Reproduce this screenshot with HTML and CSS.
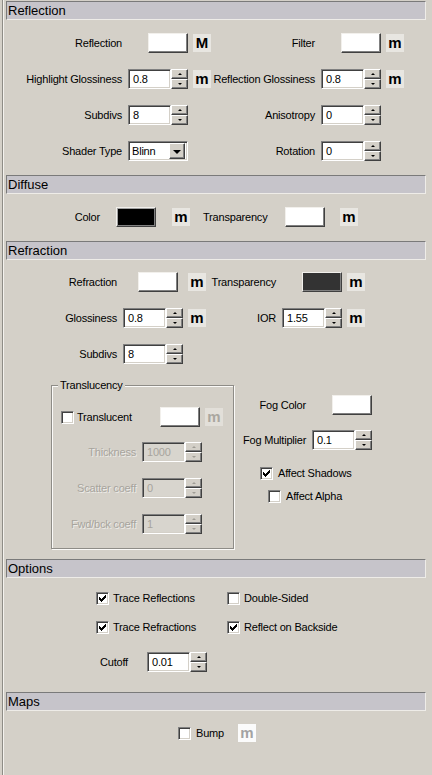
FILE: index.html
```html
<!DOCTYPE html>
<html>
<head>
<meta charset="utf-8">
<title>Material</title>
<link rel="stylesheet" href="styles.css">
</head>
<body>
<div class="panel">

  <div class="hdr hdr-first">Reflection</div>
  <div class="grid g-refl">
    <span class="lbl">Reflection</span>
    <span class="ctl end"><span class="sw sw-white"></span></span>
    <span class="mb">M</span>
    <span class="lbl">Filter</span>
    <span class="ctl end"><span class="sw sw-white"></span></span>
    <span class="mb">m</span>

    <span class="lbl">Highlight Glossiness</span>
    <span class="ctl"><span class="num">0.8</span><span class="spin"><i></i><i></i></span></span>
    <span class="mb">m</span>
    <span class="lbl">Reflection Glossiness</span>
    <span class="ctl"><span class="num">0.8</span><span class="spin"><i></i><i></i></span></span>
    <span class="mb">m</span>

    <span class="lbl">Subdivs</span>
    <span class="ctl"><span class="num">8</span><span class="spin"><i></i><i></i></span></span>
    <span></span>
    <span class="lbl">Anisotropy</span>
    <span class="ctl"><span class="num">0</span><span class="spin"><i></i><i></i></span></span>
    <span></span>

    <span class="lbl">Shader Type</span>
    <span class="ctl"><span class="sel"><span class="sel-t">Blinn</span><span class="sel-a"></span></span></span>
    <span></span>
    <span class="lbl">Rotation</span>
    <span class="ctl"><span class="num">0</span><span class="spin"><i></i><i></i></span></span>
    <span></span>
  </div>

  <div class="hdr">Diffuse</div>
  <div class="row-diff">
    <span class="lbl d-color">Color</span>
    <span class="sw sw-black"></span>
    <span class="mb d-m1">m</span>
    <span class="d-trans">Transparency</span>
    <span class="sw sw-white"></span>
    <span class="mb d-m2">m</span>
  </div>

  <div class="hdr">Refraction</div>
  <div class="grid g-refr">
    <span class="lbl">Refraction</span>
    <span class="ctl"><span class="sw sw-white sw-off"></span></span>
    <span class="mb">m</span>
    <span class="lbl">Transparency</span>
    <span class="ctl end"><span class="sw sw-dark"></span></span>
    <span class="mb">m</span>

    <span class="lbl">Glossiness</span>
    <span class="ctl"><span class="num">0.8</span><span class="spin"><i></i><i></i></span></span>
    <span class="mb">m</span>
    <span class="lbl">IOR</span>
    <span class="ctl"><span class="num">1.55</span><span class="spin"><i></i><i></i></span></span>
    <span class="mb">m</span>

    <span class="lbl">Subdivs</span>
    <span class="ctl"><span class="num">8</span><span class="spin"><i></i><i></i></span></span>
  </div>

  <div class="lower">
    <div class="group">
      <span class="legend">Translucency</span>
      <div class="tr-row">
        <span class="cb"></span>
        <span class="tr-t">Translucent</span>
        <span class="sw sw-white"></span>
        <span class="mb mb-dis tr-m">m</span>
      </div>
      <div class="grid g-tr">
        <span class="lbl dis">Thickness</span>
        <span class="ctl"><span class="num num-dis">1000</span><span class="spin spin-dis"><i></i><i></i></span></span>
        <span class="lbl dis">Scatter coeff</span>
        <span class="ctl"><span class="num num-dis">0</span><span class="spin spin-dis"><i></i><i></i></span></span>
        <span class="lbl dis">Fwd/bck coeff</span>
        <span class="ctl"><span class="num num-dis">1</span><span class="spin spin-dis"><i></i><i></i></span></span>
      </div>
    </div>

    <div class="fog">
      <div class="grid g-fog">
        <span class="lbl">Fog Color</span>
        <span class="ctl end"><span class="sw sw-white"></span></span>
        <span class="lbl">Fog Multiplier</span>
        <span class="ctl"><span class="num">0.1</span><span class="spin"><i></i><i></i></span></span>
      </div>
      <div class="cbrow fog-cb1">
        <span class="cb"><svg width="7" height="7" viewBox="0 0 7 7"><path d="M0 2h1v3H0zM1 3h1v3H1zM2 4h1v3H2zM3 3h1v3H3zM4 2h1v3H4zM5 1h1v3H5zM6 0h1v3H6z" fill="#000"/></svg></span>
        <span class="cb-t">Affect Shadows</span>
      </div>
      <div class="cbrow fog-cb2">
        <span class="cb"></span>
        <span class="cb-t">Affect Alpha</span>
      </div>
    </div>
  </div>

  <div class="hdr hdr-opt">Options</div>
  <div class="grid g-opt">
    <div class="cbrow">
      <span class="cb"><svg width="7" height="7" viewBox="0 0 7 7"><path d="M0 2h1v3H0zM1 3h1v3H1zM2 4h1v3H2zM3 3h1v3H3zM4 2h1v3H4zM5 1h1v3H5zM6 0h1v3H6z" fill="#000"/></svg></span>
      <span class="cb-t">Trace Reflections</span>
    </div>
    <div class="cbrow">
      <span class="cb"></span>
      <span class="cb-t">Double-Sided</span>
    </div>
    <div class="cbrow">
      <span class="cb"><svg width="7" height="7" viewBox="0 0 7 7"><path d="M0 2h1v3H0zM1 3h1v3H1zM2 4h1v3H2zM3 3h1v3H3zM4 2h1v3H4zM5 1h1v3H5zM6 0h1v3H6z" fill="#000"/></svg></span>
      <span class="cb-t">Trace Refractions</span>
    </div>
    <div class="cbrow">
      <span class="cb"><svg width="7" height="7" viewBox="0 0 7 7"><path d="M0 2h1v3H0zM1 3h1v3H1zM2 4h1v3H2zM3 3h1v3H3zM4 2h1v3H4zM5 1h1v3H5zM6 0h1v3H6z" fill="#000"/></svg></span>
      <span class="cb-t">Reflect on Backside</span>
    </div>
  </div>
  <div class="cut-row">
    <span class="cut-l">Cutoff</span>
    <span class="ctl"><span class="num">0.01</span><span class="spin"><i></i><i></i></span></span>
  </div>

  <div class="hdr hdr-maps">Maps</div>
  <div class="bump-row">
    <span class="cb"></span>
    <span class="cb-t">Bump</span>
    <span class="mb mb-off">m</span>
  </div>

</div>
</body>
</html>
```

FILE: styles.css
```css
* { box-sizing: border-box; }

body {
  margin: 0;
  background: #d4d0c8;
  font-family: "Liberation Sans", Arial, sans-serif;
  font-size: 11px;
  letter-spacing: -0.2px;
  color: #000;
  overflow: hidden;
}

.panel {
  margin-left: 2px;
  height: 775px;
  border-left: 1px solid #8e8c86;
  box-shadow: inset 1px 0 0 #f4f2ee;
  padding: 1px 0 0 3px;
}

/* rollout headers */
.hdr {
  width: 420px;
  height: 19px;
  margin-top: 14px;
  background: #c6c4ca;
  border: 1px solid;
  border-color: #7a7a7a #eeece8 #eeece8 #7a7a7a;
  font-size: 13px;
  line-height: 17px;
  padding-left: 1px;
  letter-spacing: 0;
}
.hdr-first { margin-top: 0; }
.hdr-opt { margin-top: 10px; }
.hdr-maps { margin-top: 20px; }

/* generic grid rows */
.grid {
  display: grid;
  grid-auto-rows: 20px;
  align-items: center;
}
.lbl {
  text-align: right;
  padding-right: 6px;
  white-space: nowrap;
  line-height: 20px;
}
.ctl {
  display: flex;
  width: 60px;
  height: 20px;
}
.ctl.end { justify-content: flex-end; }

/* numeric field */
.num {
  width: 43px;
  height: 20px;
  background: #fff;
  border: 1px solid;
  border-color: #808080 #fff #fff #808080;
  box-shadow: inset 1px 1px 0 #404040, inset -1px -1px 0 #d4d0c8;
  padding-left: 4px;
  line-height: 18px;
}
.num-dis {
  background: #d8d5ce;
  color: #a7a49d;
}

/* spinner */
.spin {
  width: 17px;
  height: 20px;
  display: flex;
  flex-direction: column;
}
.spin i {
  flex: 1;
  background: #d4d0c8;
  border: 1px solid;
  border-color: #fff #404040 #404040 #fff;
  box-shadow: inset -1px -1px 0 #808080;
  display: flex;
  align-items: center;
  justify-content: center;
}
.spin i:first-child::after {
  content: "";
  border-left: 2px solid transparent;
  border-right: 2px solid transparent;
  border-bottom: 2px solid #000;
}
.spin i:last-child::after {
  content: "";
  border-left: 2px solid transparent;
  border-right: 2px solid transparent;
  border-top: 2px solid #000;
}
.spin-dis i:first-child::after { border-bottom-color: #a09d96; }
.spin-dis i:last-child::after { border-top-color: #a09d96; }

/* colour swatch */
.sw {
  display: block;
  width: 40px;
  height: 20px;
  border: 1px solid;
  border-color: #f2f0ec #404040 #404040 #f2f0ec;
  box-shadow: inset -1px -1px 0 #808080;
}
.sw-white { background: #fff; }
.sw-black { background: #000; box-shadow: inset -1px -1px 0 #808080, inset 1px 1px 0 #a0a0a0; }
.sw-dark { background: #333; }
.sw-off { margin-left: 15px; }

/* map button */
.mb {
  display: block;
  width: 18px;
  height: 18px;
  background: #e8e6e1;
  font-weight: bold;
  font-size: 15px;
  line-height: 17px;
  text-align: center;
  letter-spacing: 0;
}
.mb-dis { color: #aaa7a0; background: #e2dfd9; }
.mb-off { color: #a3a3a3; background: #fbfbfb; }

/* dropdown */
.sel {
  display: flex;
  align-items: center;
  width: 60px;
  height: 20px;
  background: #fff;
  border: 1px solid;
  border-color: #808080 #fff #fff #808080;
  box-shadow: inset 1px 1px 0 #404040, inset -1px -1px 0 #d4d0c8;
  padding: 1px 2px 1px 3px;
}
.sel-t { flex: 1; }
.sel-a {
  width: 16px;
  height: 16px;
  background: #d4d0c8;
  border: 1px solid;
  border-color: #fff #404040 #404040 #fff;
  box-shadow: inset -1px -1px 0 #808080;
  display: flex;
  align-items: center;
  justify-content: center;
}
.sel-a::after {
  content: "";
  border-left: 4px solid transparent;
  border-right: 4px solid transparent;
  border-top: 4px solid #000;
  margin-top: 1px;
}

/* Reflection */
.g-refl {
  margin-top: 13px;
  grid-template-columns: 122px 65px 18px 110px 65px 18px;
  row-gap: 16px;
}

/* Diffuse */
.row-diff {
  display: flex;
  align-items: center;
  height: 20px;
  margin-top: 13px;
}
.d-color { width: 94px; padding-right: 0; margin-right: 16px; }
.d-m1 { margin-left: 16px; }
.d-trans { width: 82px; margin-left: 13px; white-space: nowrap; }
.d-m2 { margin-left: 15px; }

/* Refraction */
.g-refr {
  margin-top: 12px;
  grid-template-columns: 117px 65px 18px 76px 65px 18px;
  row-gap: 16px;
}

.lower {
  display: flex;
  margin: 21px 0 0 45px;
}

.group {
  width: 183px;
  height: 164px;
  border: 1px solid #8e8c87;
  box-shadow: inset 1px 1px 0 #fbfaf8, 1px 1px 0 #fbfaf8;
}
.legend {
  display: block;
  width: fit-content;
  margin: -7px 0 0 6px;
  padding: 0 2px;
  line-height: 13px;
  background: #d4d0c8;
}
.tr-row {
  display: flex;
  align-items: center;
  height: 20px;
  margin-top: 15px;
  padding-left: 9px;
}
.tr-t { width: 86px; padding-left: 3px; white-space: nowrap; }
.tr-m { margin-left: 5px; }
.g-tr {
  margin-top: 15px;
  grid-template-columns: 90px 60px;
  row-gap: 16px;
}
.dis {
  color: #a7a49d;
  text-shadow: 1px 1px 0 rgba(255, 255, 255, 0.6);
}

/* checkbox */
.cb {
  display: flex;
  align-items: center;
  justify-content: center;
  flex: none;
  width: 13px;
  height: 13px;
  background: #fff;
  border: 1px solid;
  border-color: #808080 #fff #fff #808080;
  box-shadow: inset 1px 1px 0 #404040, inset -1px -1px 0 #d4d0c8;
}
.cb svg { display: block; }
.cbrow {
  display: flex;
  align-items: center;
  height: 13px;
  line-height: 13px;
  white-space: nowrap;
}
.cb-t { margin-left: 5px; }

.fog { margin-left: 9px; padding-top: 10px; }
.g-fog {
  grid-template-columns: 69px 60px;
  row-gap: 15px;
}
.fog-cb1 { margin-top: 17px; padding-left: 17px; }
.fog-cb2 { margin-top: 10px; padding-left: 25px; }

/* Options */
.g-opt {
  margin: 14px 0 0 90px;
  grid-template-columns: 131px auto;
  grid-auto-rows: 13px;
  row-gap: 16px;
}
.g-opt .cb-t { margin-left: 4px; }
.cut-row {
  display: flex;
  align-items: center;
  height: 20px;
  margin: 18px 0 0 94px;
}
.cut-l { width: 47px; }

/* Maps */
.bump-row {
  display: flex;
  align-items: center;
  height: 18px;
  margin: 13px 0 0 172px;
}
.bump-row .mb { margin-left: 14px; }
```
